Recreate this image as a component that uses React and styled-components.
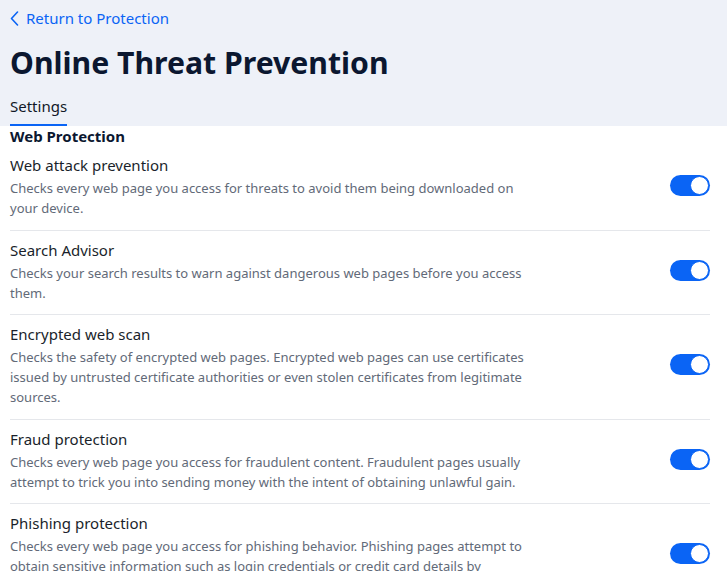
import React from 'react'
import styled, {createGlobalStyle} from 'styled-components'

const GlobalStyle = createGlobalStyle`
  html, body {
    margin: 0;
    padding: 0;
    background: #ffffff;
    font-family: "Noto Sans", "Open Sans", sans-serif;
  }
`

const Page = styled.div`
  width: 727px;
  height: 571px;
  overflow: hidden;
  display: flex;
  flex-direction: column;
`

const Header = styled.header`
  background: #eef1f8;
  padding: 7px 17px 0 10px;
  display: flex;
  flex-direction: column;
`

const BackLink = styled.a`
  display: flex;
  align-items: center;
  gap: 7px;
  height: 22px;
  color: #0a64f5;
  font-size: 15px;
  text-decoration: none;
  cursor: pointer;
`

const PageTitle = styled.h1`
  margin: 12px 0 0 0;
  font-size: 30.2px;
  line-height: 44px;
  font-weight: 700;
  color: #0b1730;
`

const Tabs = styled.div`
  display: flex;
  margin-top: 10px;
`

const Tab = styled.div`
  font-size: 15px;
  line-height: 22px;
  color: #111827;
  padding-bottom: 7px;
  border-bottom: 2px solid ${p => (p.$active ? '#0a64f5' : 'transparent')};
`

const Content = styled.main`
  padding: 0 17px 0 10px;
  display: flex;
  flex-direction: column;
`

const SectionTitle = styled.h2`
  margin: 0;
  font-size: 15px;
  line-height: 20px;
  font-weight: 700;
  color: #0b1730;
`

const Row = styled.div`
  display: flex;
  align-items: center;
  justify-content: space-between;
  padding: 7px 0 11.5px 0;
  border-bottom: ${p => (p.$last ? 'none' : '1px solid #e5e7eb')};
`

const RowText = styled.div`
  display: flex;
  flex-direction: column;
  width: 530px;
`

const RowTitle = styled.div`
  font-size: 15px;
  line-height: 25px;
  color: #1a1f2b;
`

const RowDesc = styled.div`
  font-size: 13px;
  line-height: 20px;
  color: #626a78;
`

const Switch = styled.button`
  position: relative;
  width: 40px;
  height: 21px;
  border: none;
  border-radius: 11px;
  padding: 0;
  background: ${p => (p.$on ? '#0a64f5' : '#c4c9d2')};
  cursor: pointer;
  flex-shrink: 0;
`

const Knob = styled.span`
  position: absolute;
  top: 1px;
  left: ${p => (p.$on ? '20px' : '1px')};
  width: 17px;
  height: 17px;
  border-radius: 50%;
  background: #ffffff;
  border: 1px solid #0a64f5;
`

const settings = [
  {
    title: 'Web attack prevention',
    desc: 'Checks every web page you access for threats to avoid them being downloaded on your device.',
  },
  {
    title: 'Search Advisor',
    desc: 'Checks your search results to warn against dangerous web pages before you access them.',
  },
  {
    title: 'Encrypted web scan',
    desc: 'Checks the safety of encrypted web pages. Encrypted web pages can use certificates issued by untrusted certificate authorities or even stolen certificates from legitimate sources.',
  },
  {
    title: 'Fraud protection',
    desc: 'Checks every web page you access for fraudulent content. Fraudulent pages usually attempt to trick you into sending money with the intent of obtaining unlawful gain.',
  },
  {
    title: 'Phishing protection',
    desc: 'Checks every web page you access for phishing behavior. Phishing pages attempt to obtain sensitive information such as login credentials or credit card details by impersonating trustworthy entities.',
  },
]

const App = () => {
  return (
    <Page>
      <GlobalStyle />
      <Header>
        <BackLink>
          <svg width="9" height="15" viewBox="0 0 9 15" fill="none">
            <path d="M7.5 1 L1.5 7.5 L7.5 14" stroke="#0a64f5" strokeWidth="1.6" strokeLinecap="round" strokeLinejoin="round" />
          </svg>
          Return to Protection
        </BackLink>
        <PageTitle>Online Threat Prevention</PageTitle>
        <Tabs>
          <Tab $active>Settings</Tab>
        </Tabs>
      </Header>
      <Content>
        <SectionTitle>Web Protection</SectionTitle>
        {settings.map((s, i) => (
          <Row key={s.title} $last={i === settings.length - 1}>
            <RowText>
              <RowTitle>{s.title}</RowTitle>
              <RowDesc>{s.desc}</RowDesc>
            </RowText>
            <Switch $on aria-label={s.title}>
              <Knob $on />
            </Switch>
          </Row>
        ))}
      </Content>
    </Page>
  )
}

export default App
